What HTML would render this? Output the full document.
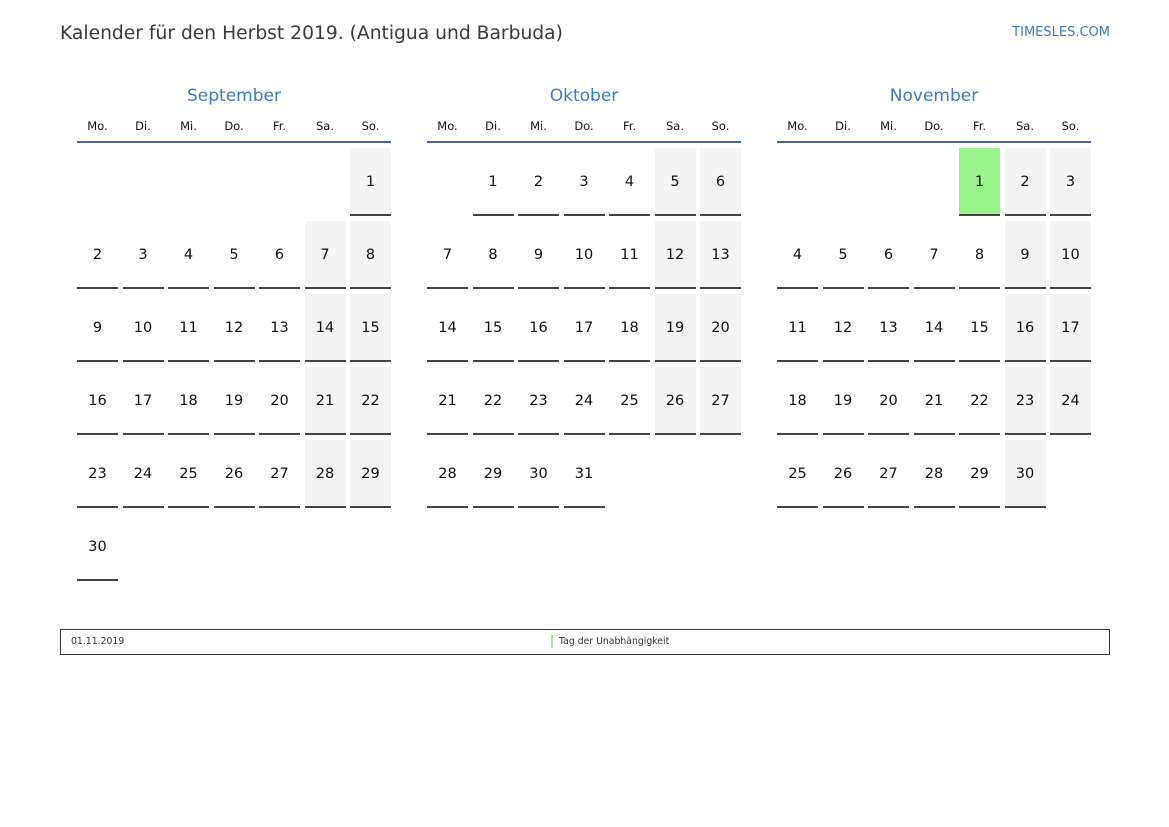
<!DOCTYPE html>
<html><head><meta charset="utf-8"><style>
body{margin:0;width:1169px;height:827px;background:#fff;font-family:"DejaVu Sans","Liberation Sans",sans-serif;position:relative;overflow:hidden}
.t{position:absolute;left:60px;top:23px;font-size:18.7px;color:#3a3a3a}
.l{position:absolute;right:59px;top:25px;font-size:13px;color:#3a7cc4}
.m{position:absolute;top:85px;width:314px}
.mn{text-align:center;font-size:17px;color:#3a7cc4;height:22px;line-height:22px}
.h{display:grid;grid-template-columns:repeat(7,41px);column-gap:4.5px;margin-top:9px;font-size:11.5px;color:#111;text-align:center;height:20px;line-height:20px}
.hl{height:2px;background:#4a6a96;margin-top:5px;width:314px}
.g{display:grid;grid-template-columns:repeat(7,41px);column-gap:4.5px;row-gap:5px;margin-top:5px}
.g div{height:68px;box-sizing:border-box;text-align:center;line-height:69px;font-size:14.5px;color:#111}
.g .d{border-bottom:2px solid #444}
.g .w{background:#f4f4f4}
.g .hol{background:#99f58a}
.f{position:absolute;left:60px;top:629px;width:1048px;height:24px;border:1px solid #333;font-size:9.3px;color:#333}
</style></head><body>
<div class="t">Kalender für den Herbst 2019. (Antigua und Barbuda)</div>
<div class="l">TIMESLES.COM</div>

<div class="m" style="left:77px">
<div class="mn">September</div>
<div class="h"><span>Mo.</span><span>Di.</span><span>Mi.</span><span>Do.</span><span>Fr.</span><span>Sa.</span><span>So.</span></div>
<div class="hl"></div>
<div class="g">
<div></div><div></div><div></div><div></div><div></div><div></div><div class="d w">1</div>
<div class="d">2</div><div class="d">3</div><div class="d">4</div><div class="d">5</div><div class="d">6</div><div class="d w">7</div><div class="d w">8</div>
<div class="d">9</div><div class="d">10</div><div class="d">11</div><div class="d">12</div><div class="d">13</div><div class="d w">14</div><div class="d w">15</div>
<div class="d">16</div><div class="d">17</div><div class="d">18</div><div class="d">19</div><div class="d">20</div><div class="d w">21</div><div class="d w">22</div>
<div class="d">23</div><div class="d">24</div><div class="d">25</div><div class="d">26</div><div class="d">27</div><div class="d w">28</div><div class="d w">29</div>
<div class="d">30</div>
</div></div>

<div class="m" style="left:427px">
<div class="mn">Oktober</div>
<div class="h"><span>Mo.</span><span>Di.</span><span>Mi.</span><span>Do.</span><span>Fr.</span><span>Sa.</span><span>So.</span></div>
<div class="hl"></div>
<div class="g">
<div></div><div class="d">1</div><div class="d">2</div><div class="d">3</div><div class="d">4</div><div class="d w">5</div><div class="d w">6</div>
<div class="d">7</div><div class="d">8</div><div class="d">9</div><div class="d">10</div><div class="d">11</div><div class="d w">12</div><div class="d w">13</div>
<div class="d">14</div><div class="d">15</div><div class="d">16</div><div class="d">17</div><div class="d">18</div><div class="d w">19</div><div class="d w">20</div>
<div class="d">21</div><div class="d">22</div><div class="d">23</div><div class="d">24</div><div class="d">25</div><div class="d w">26</div><div class="d w">27</div>
<div class="d">28</div><div class="d">29</div><div class="d">30</div><div class="d">31</div>
</div></div>

<div class="m" style="left:777px">
<div class="mn">November</div>
<div class="h"><span>Mo.</span><span>Di.</span><span>Mi.</span><span>Do.</span><span>Fr.</span><span>Sa.</span><span>So.</span></div>
<div class="hl"></div>
<div class="g">
<div></div><div></div><div></div><div></div><div class="d hol">1</div><div class="d w">2</div><div class="d w">3</div>
<div class="d">4</div><div class="d">5</div><div class="d">6</div><div class="d">7</div><div class="d">8</div><div class="d w">9</div><div class="d w">10</div>
<div class="d">11</div><div class="d">12</div><div class="d">13</div><div class="d">14</div><div class="d">15</div><div class="d w">16</div><div class="d w">17</div>
<div class="d">18</div><div class="d">19</div><div class="d">20</div><div class="d">21</div><div class="d">22</div><div class="d w">23</div><div class="d w">24</div>
<div class="d">25</div><div class="d">26</div><div class="d">27</div><div class="d">28</div><div class="d">29</div><div class="d w">30</div>
</div></div>

<div class="f">
<span style="position:absolute;left:10px;top:6px">01.11.2019</span>
<span style="position:absolute;left:490px;top:5px;width:2px;height:13px;background:#99f58a"></span>
<span style="position:absolute;left:498px;top:6px">Tag der Unabhängigkeit</span>
</div>
</body></html>
